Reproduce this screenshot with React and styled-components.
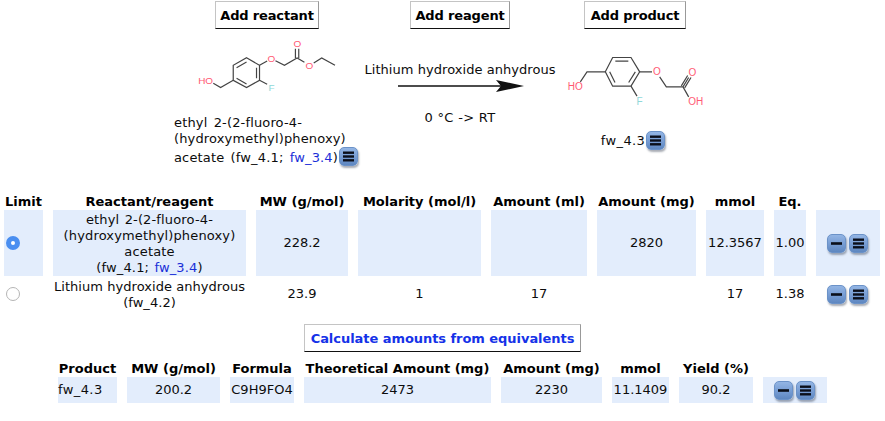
import React from 'react';
import styled, { createGlobalStyle } from 'styled-components';

const GlobalStyle = createGlobalStyle`
  html, body {
    margin: 0;
    padding: 0;
    background: #fff;
  }
  body {
    font-family: "DejaVu Sans", Verdana, sans-serif;
    font-size: 13px;
    line-height: 16px;
    color: #0c0c0c;
  }
`;

const HO_RED = '#ff5a73';
const F_TEAL = '#8fd8d8';
const BOND = '#444';

const ReactantMolecule = () => (
  <MoleculeSvg viewBox="100 110 430 165" width="143" height="55">
    <g fill="none" stroke={BOND} strokeWidth="3.6">
      <path d="M258 172L297 195V240L258 262L218 240V195Z" />
      <path d="M258 185L228 202M288 202V234M228 234L258 251" />
      <path d="M297 195L320 182M345 181L372 195L410 173L432 186M460 188L484 173L524 195" />
      <path d="M405 173V145M415 173V145" />
      <path d="M297 240L320 252M218 240L180 262L158 249" />
    </g>
    <g fontFamily="Liberation Sans, sans-serif" fontSize="30">
      <text x="333" y="184" fill={HO_RED} textAnchor="middle">O</text>
      <text x="411" y="141" fill={HO_RED} textAnchor="middle">O</text>
      <text x="447" y="206" fill={HO_RED} textAnchor="middle">O</text>
      <text x="135" y="250" fill={HO_RED} textAnchor="middle">HO</text>
      <text x="333" y="271" fill={F_TEAL} textAnchor="middle">F</text>
    </g>
  </MoleculeSvg>
);

const ProductMolecule = () => (
  <MoleculeSvg viewBox="620 150 420 170" width="140" height="57">
    <g fill="none" stroke={BOND} strokeWidth="3.6">
      <path d="M757 172H812L838 215L812 258H757L735 215Z" />
      <path d="M765 183H804M825 215L805 247M764 247L748 215" />
      <path d="M838 215H875M898 230L918 260H968L985 232M968 260L985 290" />
      <path d="M963 257L982 226M973 263L992 232" />
      <path d="M812 258L830 288M735 215H680L660 245" />
    </g>
    <g fontFamily="Liberation Sans, sans-serif" fontSize="30">
      <text x="890" y="226" fill={HO_RED} textAnchor="middle">O</text>
      <text x="996" y="227" fill={HO_RED} textAnchor="middle">O</text>
      <text x="1006" y="316" fill={HO_RED} textAnchor="middle">OH</text>
      <text x="645" y="271" fill={HO_RED} textAnchor="middle">HO</text>
      <text x="838" y="316" fill={F_TEAL} textAnchor="middle">F</text>
    </g>
  </MoleculeSvg>
);

const MenuIcon = () => (
  <svg width="11" height="11" viewBox="0 0 11 11" fill="#0b0f1a">
    <rect x="0" y="0.5" width="11" height="2.4" />
    <rect x="0" y="4.3" width="11" height="2.4" />
    <rect x="0" y="8.1" width="11" height="2.4" />
  </svg>
);

const MinusIcon = () => (
  <svg width="11" height="11" viewBox="0 0 11 11" fill="#0b0f1a">
    <rect x="0" y="4.2" width="11" height="2.6" />
  </svg>
);

const Actions = () => (
  <ActionGroup>
    <IconButton type="button"><MinusIcon /></IconButton>
    <IconButton type="button"><MenuIcon /></IconButton>
  </ActionGroup>
);

const reagentHeads = ['Limit', 'Reactant/reagent', 'MW (g/mol)', 'Molarity (mol/l)', 'Amount (ml)', 'Amount (mg)', 'mmol', 'Eq.', ''];
const productHeads = ['Product', 'MW (g/mol)', 'Formula', 'Theoretical Amount (mg)', 'Amount (mg)', 'mmol', 'Yield (%)', ''];
const productValues = ['200.2', 'C9H9FO4', '2473', '2230', '11.1409', '90.2'];

export default function App() {
  const reagents = [
    {
      id: 'a',
      checked: true,
      shaded: true,
      name: (
        <>
          ethyl 2-(2-fluoro-4-<br />(hydroxymethyl)phenoxy)<br />acetate<br />
          (fw_4.1; <Link>fw_3.4</Link>)
        </>
      ),
      values: ['228.2', '', '', '2820', '12.3567', '1.00'],
    },
    {
      id: 'b',
      checked: false,
      shaded: false,
      name: (
        <>
          Lithium hydroxide anhydrous<br />(fw_4.2)
        </>
      ),
      values: ['23.9', '1', '17', '', '17', '1.38'],
    },
  ];

  return (
    <Page>
      <GlobalStyle />
      <Scheme>
        <ReactantColumn>
          <PlainButton type="button" $width={104}>Add reactant</PlainButton>
          <ReactantMolecule />
          <CompoundName>
            ethyl 2-(2-fluoro-4-<br />(hydroxymethyl)phenoxy)
            <CompoundLastLine>
              <span>acetate (fw_4.1; <Link>fw_3.4</Link>)</span>
              <InlineButton type="button"><MenuIcon /></InlineButton>
            </CompoundLastLine>
          </CompoundName>
        </ReactantColumn>
        <ReagentColumn>
          <PlainButton type="button" $width={100}>Add reagent</PlainButton>
          <ReagentName>Lithium hydroxide anhydrous</ReagentName>
          <ArrowSvg width="127" height="14" viewBox="0 0 127 14">
            <path d="M0 7H112" stroke="#111" strokeWidth="1.4" />
            <path d="M98 1L126 7L98 13L103 7Z" fill="#111" />
          </ArrowSvg>
          <Conditions>0 °C -&gt; RT</Conditions>
        </ReagentColumn>
        <ProductColumn>
          <PlainButton type="button" $width={102}>Add product</PlainButton>
          <ProductMolecule />
          <ProductName>
            fw_4.3
            <InlineButton type="button"><MenuIcon /></InlineButton>
          </ProductName>
        </ProductColumn>
      </Scheme>

      <ReagentGrid>
        {reagentHeads.map((head, i) => <HeadCell key={i}>{head}</HeadCell>)}
        {reagents.map((row) => (
          <React.Fragment key={row.id}>
            <Cell $shaded={row.shaded}>
              <Radio type="radio" name="limit" defaultChecked={row.checked} />
            </Cell>
            <Cell $shaded={row.shaded}>
              <NameText $wide={row.shaded}>{row.name}</NameText>
            </Cell>
            {row.values.map((value, i) => (
              <Cell key={i} $shaded={row.shaded}>{value}</Cell>
            ))}
            <Cell $shaded={row.shaded}><Actions /></Cell>
          </React.Fragment>
        ))}
      </ReagentGrid>

      <CalculateRow>
        <CalculateButton type="button" $width={277}>Calculate amounts from equivalents</CalculateButton>
      </CalculateRow>

      <ProductGrid>
        {productHeads.map((head, i) => <HeadCell key={i}>{head}</HeadCell>)}
        <Cell $shaded $left>fw_4.3</Cell>
        {productValues.map((value, i) => (
          <Cell key={i} $shaded>{value}</Cell>
        ))}
        <Cell $shaded><Actions /></Cell>
      </ProductGrid>
    </Page>
  );
}

const Page = styled.div`
  width: 885px;
  height: 421px;
  overflow: hidden;
  padding-top: 1px;
  box-sizing: border-box;
`;

const Scheme = styled.div`
  display: grid;
  grid-template-columns: 186px 200px 150px;
  padding-left: 174px;
  height: 192px;
`;

const ReactantColumn = styled.div`
  display: flex;
  flex-direction: column;
  align-items: center;
`;

const ReagentColumn = styled.div`
  display: flex;
  flex-direction: column;
  align-items: center;
`;

const ProductColumn = styled.div`
  display: flex;
  flex-direction: column;
  align-items: center;
`;

const PlainButton = styled.button`
  width: ${(p) => p.$width}px;
  height: 28px;
  padding: 0;
  background: #fff;
  border: 1px solid #c4c4c4;
  border-bottom-color: #111;
  border-right-color: #999;
  font: bold 13px "DejaVu Sans", Verdana, sans-serif;
  letter-spacing: -0.15px;
  white-space: nowrap;
  color: #000;
`;

const MoleculeSvg = styled.svg`
  display: block;
  margin-top: 8px;
  margin-right: 4px;
  flex: none;

  ${ProductColumn} & {
    margin-top: 21px;
    margin-left: 4px;
    margin-right: 0;
  }
`;

const CompoundName = styled.div`
  width: 190px;
  margin-top: 23px;
  letter-spacing: 0.15px;
  word-spacing: 2px;
  align-self: flex-start;
  white-space: nowrap;
`;

const CompoundLastLine = styled.div`
  display: flex;
  align-items: flex-end;
  height: 19px;
`;

const ReagentName = styled.div`
  margin-top: 33px;
  white-space: nowrap;
  letter-spacing: 0.05px;
`;

const ArrowSvg = styled.svg`
  display: block;
  margin-top: 1px;
  margin-left: 2px;
`;

const Conditions = styled.div`
  margin-top: 17px;
  letter-spacing: 0.3px;
`;

const ProductName = styled.div`
  margin-top: 24px;
  display: flex;
  align-items: center;
  letter-spacing: 0.4px;
  margin-left: -4px;
`;

const Link = styled.span`
  color: #1a2fd8;
`;

const NameText = styled.div`
  padding-top: 2px;
  letter-spacing: ${(p) => (p.$wide ? '0.15px' : '0.05px')};
  word-spacing: ${(p) => (p.$wide ? '1px' : '0')};
`;

const IconButton = styled.button`
  width: 19px;
  height: 19px;
  padding: 0;
  display: inline-flex;
  align-items: center;
  justify-content: center;
  border: 1px solid #6b92c8;
  border-radius: 5px;
  background: linear-gradient(#93b5e4, #769cd3 55%, #5e87c0);
  box-shadow: 1px 2px 2px rgba(40, 50, 70, 0.4);
`;

const InlineButton = styled(IconButton)`
  margin-left: 1px;
`;

const ActionGroup = styled.div`
  display: flex;
  gap: 3px;
  margin-left: -1px;
`;

const DataGrid = styled.div`
  display: grid;
  column-gap: 10px;
  text-align: center;
`;

const ReagentGrid = styled(DataGrid)`
  grid-template-columns: 39px 193px 92px 123px 96px 99px 58px 32px 64px;
  grid-template-rows: 17px 66px 36px;
  padding-left: 4px;
`;

const ProductGrid = styled(DataGrid)`
  grid-template-columns: 59px 93px 64px 187px 101px 57px 74px 64px;
  grid-template-rows: 17px 26px;
  padding-left: 58px;
  margin-top: 8px;
`;

const HeadCell = styled.div`
  font-weight: bold;
  white-space: nowrap;
  display: flex;
  justify-content: center;
  align-items: center;
  color: #000;
`;

const Cell = styled.div`
  display: flex;
  align-items: center;
  justify-content: ${(p) => (p.$left ? 'flex-start' : 'center')};
  background: ${(p) => (p.$shaded ? '#e3edfc' : 'transparent')};
  white-space: nowrap;
  letter-spacing: ${(p) => (p.$left ? '0.4px' : '0')};
`;

const Radio = styled.input`
  appearance: none;
  width: 14px;
  height: 14px;
  margin: 0 21px 0 0;
  border-radius: 50%;
  border: 1px solid #b5b5b5;
  background: #fff;
  box-sizing: border-box;

  &:checked {
    border: 5px solid #4a8ef0;
  }
`;

const CalculateRow = styled.div`
  display: flex;
  justify-content: center;
  margin-top: 12px;
`;

const CalculateButton = styled(PlainButton)`
  color: #1532e8;
  letter-spacing: -0.05px;
`;
